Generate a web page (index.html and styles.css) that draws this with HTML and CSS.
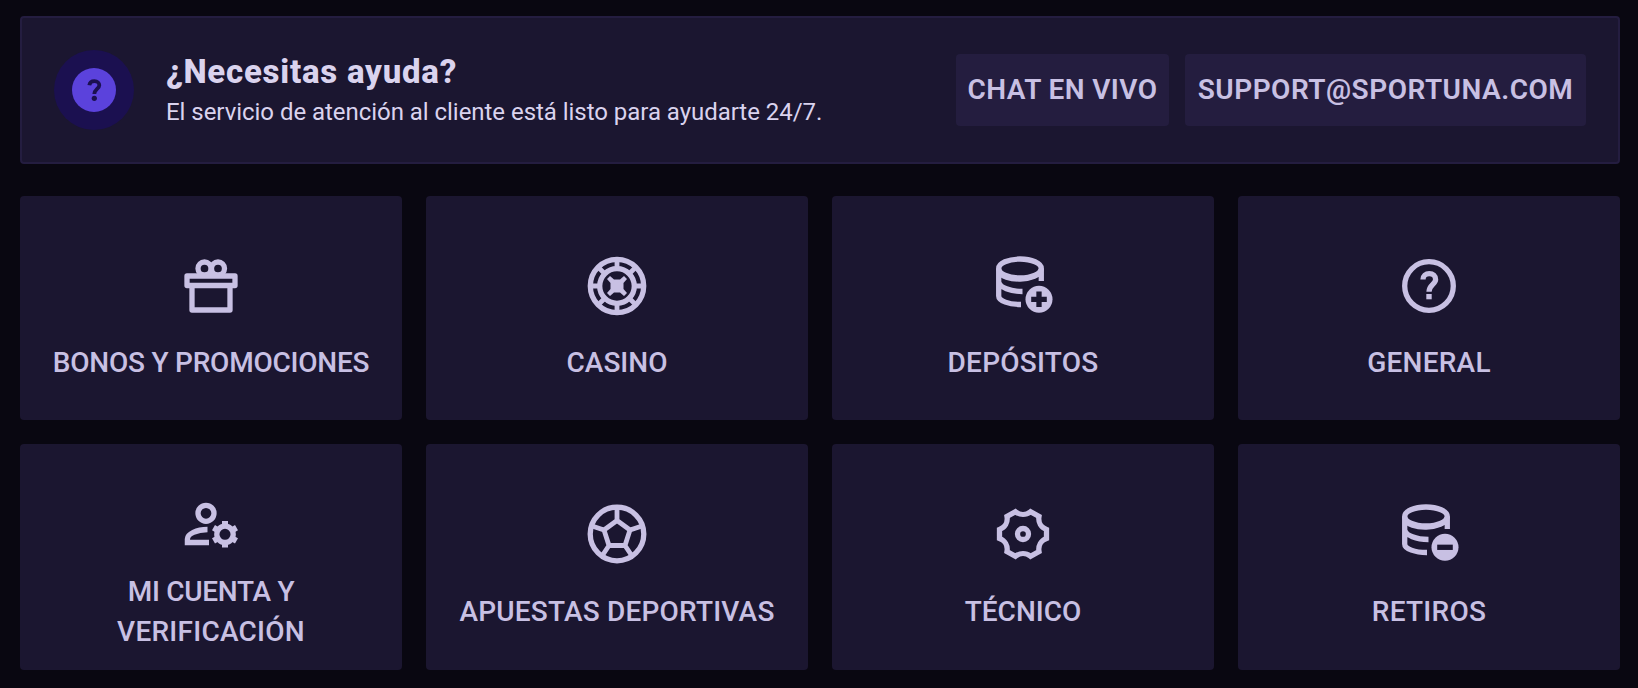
FILE: index.html
```html
<!DOCTYPE html>
<html lang="es">
<head>
<meta charset="utf-8">
<title>Ayuda</title>
<link rel="stylesheet" href="styles.css">
</head>
<body>
<main class="page">
  <section class="help">
    <div class="help-icon">
      <svg width="44" height="44" viewBox="0 0 44 44"><circle cx="22" cy="22" r="22" fill="#5b42dc"/><path d="M17.300 17.300C17.700 14.700 19.600 13.200 22.400 13.200C25.400 13.200 27.300 14.900 27.300 17.200C27.300 20.800 22.300 21.200 22.300 26.100" fill="none" stroke="#1b1050" stroke-width="3.800"/><circle cx="22.300" cy="30.300" r="2.600" fill="#1b1050"/></svg>
    </div>
    <div class="help-text">
      <h1 class="help-title">¿Necesitas ayuda?</h1>
      <p class="help-sub">El servicio de atención al cliente está listo para ayudarte 24/7.</p>
    </div>
    <div class="help-actions">
      <a class="button chat">CHAT EN VIVO</a>
      <a class="button mail">SUPPORT@SPORTUNA.COM</a>
    </div>
  </section>
  <section class="grid">
    <a class="card">
      <svg class="icon" viewBox="1.5 0 80 80"><path class="round" d="M17.500 31H65.500V40.500H17.500ZM22.500 41V65H60.500V41" /><circle cx="35" cy="23.500" r="6.500"/><circle cx="48.500" cy="23.500" r="6.500"/></svg>
      <span class="label bonos">BONOS Y PROMOCIONES</span>
    </a>
    <a class="card">
      <svg class="icon" viewBox="0 0 80 80"><circle cx="40" cy="41" r="26.700"/><circle cx="40" cy="41" r="17.300"/><path class="spokes" d="M40 15V23M40 59V67M14 41H22M58 41H66M21.600 22.600L27.300 28.300M58.400 22.600L52.700 28.300M21.600 59.400L27.300 53.700M58.400 59.400L52.700 53.700"/><path class="fill" d="M33 31L37 34.500H43L47 31L50 34L46.500 38V44L50 48L47 51L43 47.500H37L33 51L30 48L33.500 44V38L30 34Z"/></svg>
      <span class="label casino">CASINO</span>
    </a>
    <a class="card">
      <svg class="icon" viewBox="0 0 80 80"><ellipse cx="37" cy="23.500" rx="21.300" ry="9.500"/><path d="M15.700 23.500V51C15.700 56 26 59.500 38 59.500M15.700 37C17 42.500 27 46.500 39.500 46.500M16 26C19 37 56 37 58.300 24M58.300 23.500V36"/><circle class="fill" cx="56" cy="54.300" r="13.500"/><path class="cut" d="M56 46.500V62M48.200 54.300H63.800"/></svg>
      <span class="label depositos">DEPÓSITOS</span>
    </a>
    <a class="card">
      <svg class="icon" viewBox="0 0 80 80"><circle cx="40" cy="41" r="24.300"/><path d="M34 34.500C34 31 36.700 28.700 40.300 28.700C44 28.700 46.600 31 46.600 34.500C46.600 39.200 40 39.800 40 46.700"/><path class="fill" d="M37.300 49H42.700V54.300H37.300Z"/></svg>
      <span class="label general">GENERAL</span>
    </a>
    <a class="card two-lines">
      <svg class="icon" viewBox="1.5 0 80 80"><circle cx="36.500" cy="20.300" r="8"/><path d="M38 36.500C27 36.500 17.900 41 17.900 46V49.500H39.500"/><circle cx="55.500" cy="41.300" r="8.200"/><path class="teeth" d="M55.500 34.300V28M55.500 48.300V54.600M61.600 37.800L67 34.700M61.600 44.800L67 47.900M49.400 37.800L44 34.700M49.400 44.800L44 47.900"/></svg>
      <span class="label"><span class="cuenta">MI CUENTA Y</span><br><span class="verificacion">VERIFICACIÓN</span></span>
    </a>
    <a class="card lower">
      <svg class="icon" viewBox="0 0 80 80"><circle cx="40" cy="41" r="26.800"/><path class="ball" d="M40 27.500L53 37L48 52.500H32L27 37ZM40 27.500V15M53 37L65 33M48 52.500L55 63M32 52.500L25 63M27 37L15 33"/></svg>
      <span class="label apuestas">APUESTAS DEPORTIVAS</span>
    </a>
    <a class="card lower">
      <svg class="icon" viewBox="0 0 80 80"><path d="M32.500 18.700C37 22.300 43 22.300 47.500 18.700L56 23.500C55 29.500 58 34.500 63.500 36.500V45.500C58 47.500 55 52.500 56 58.500L47.500 63.300C43 59.700 37 59.700 32.500 63.300L24 58.500C25 52.500 22 47.500 16.500 45.500V36.500C22 34.500 25 29.500 24 23.500Z"/><circle cx="40" cy="41" r="5.500"/></svg>
      <span class="label tecnico">TÉCNICO</span>
    </a>
    <a class="card lower">
      <svg class="icon" viewBox="0 0 80 80"><ellipse cx="37" cy="23.500" rx="21.300" ry="9.500"/><path d="M15.700 23.500V51C15.700 56 26 59.500 38 59.500M15.700 37C17 42.500 27 46.500 39.500 46.500M16 26C19 37 56 37 58.300 24M58.300 23.500V36"/><circle class="fill" cx="56" cy="54.300" r="13.500"/><path class="cut" d="M48.200 54.300H63.800"/></svg>
      <span class="label retiros">RETIROS</span>
    </a>
  </section>
</main>
</body>
</html>
```
FILE: styles.css
```css
* { box-sizing: border-box; }
body { margin: 0; background: #090711; color: #c8c0e3; font-family: Roboto, "Liberation Sans", sans-serif; }
.page { height: 688px; padding: 16px 18px 0 20px; display: flex; flex-direction: column; gap: 32px; }
.help { height: 148px; display: flex; align-items: center; padding: 0 32px; background: #1b1630; border: 2px solid #241d40; border-radius: 4px; }
.help-icon { width: 80px; height: 80px; border-radius: 50%; background: #1b1050; display: flex; align-items: center; justify-content: center; }
.help-text { margin-left: 32px; display: flex; flex-direction: column; gap: 3px; padding-top: 3px; color: #dad3ee; white-space: nowrap; }
.help-title { margin: 0; font-size: 33px; line-height: 38px; font-weight: 800; letter-spacing: 0.75px; }
.help-sub { margin: 0; font-size: 24px; line-height: 36px; letter-spacing: -0.04px; }
.help-actions { margin-left: auto; display: flex; gap: 16px; }
.button { height: 72px; padding-bottom: 2px; display: flex; align-items: center; justify-content: center; background: #241d3f; border-radius: 4px; font-size: 28px; font-weight: 600; letter-spacing: 0.4px; white-space: nowrap; }
.chat { width: 213px; }
.mail { width: 401px; letter-spacing: 0.5px; }
.grid { display: grid; grid-template-columns: repeat(4, 1fr); grid-template-rows: 224px 226px; gap: 24px; }
.card { display: flex; flex-direction: column; align-items: center; gap: 18px; padding-top: 49px; background: #1b1630; border-radius: 4px; }
.icon { width: 80px; height: 80px; flex: none; fill: none; stroke: #c8c0e3; stroke-width: 5.3; }
.icon .fill { fill: #c8c0e3; stroke: none; }
.icon .cut { stroke: #1b1630; stroke-width: 5.3; }
.icon .spokes { stroke-width: 4.8; }
.icon .round { stroke-linejoin: round; }
.icon .teeth { stroke-width: 6; }
.icon .ball { stroke-width: 4.8; }
.label { font-size: 28px; line-height: 40px; font-weight: 500; text-align: center; white-space: nowrap; }
.card.lower { gap: 19px; }
.card.two-lines { gap: 0; }
.two-lines .label { margin-top: -1px; }
.bonos { letter-spacing: -0.23px; }
.depositos, .general, .retiros, .verificacion { letter-spacing: 0.25px; }
.cuenta { letter-spacing: -0.3px; }
.apuestas { letter-spacing: 0.2px; }
```
